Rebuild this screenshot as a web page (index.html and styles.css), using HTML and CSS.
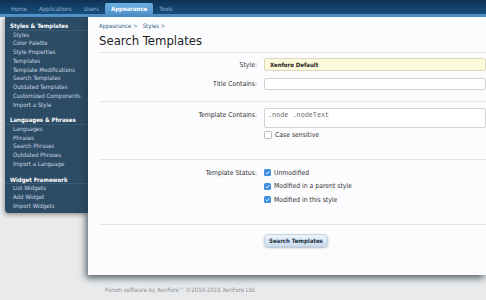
FILE: index.html
```html
<!DOCTYPE html>
<html lang="en">
<head>
    <meta charset="UTF-8">
    <meta name="viewport" content="width=device-width, initial-scale=1.0">
    <title>Search Templates</title>
    <link rel="stylesheet" href="styles.css">
</head>
<body>
    <div class="nav">
        <a class="tab">Home</a>
        <a class="tab">Applications</a>
        <a class="tab">Users</a>
        <a class="tab active">Appearance</a>
        <a class="tab">Tools</a>
    </div>
    <div class="nav-strip"></div>

    <div class="layout">
        <div class="sidebar">
            <div class="side-section">
                <div class="side-heading">Styles &amp; Templates</div>
                <a class="side-link">Styles</a>
                <a class="side-link">Color Palette</a>
                <a class="side-link">Style Properties</a>
                <a class="side-link">Templates</a>
                <a class="side-link">Template Modifications</a>
                <a class="side-link">Search Templates</a>
                <a class="side-link">Outdated Templates</a>
                <a class="side-link">Customized Components</a>
                <a class="side-link">Import a Style</a>
            </div>
            <div class="side-section">
                <div class="side-heading">Languages &amp; Phrases</div>
                <a class="side-link">Languages</a>
                <a class="side-link">Phrases</a>
                <a class="side-link">Search Phrases</a>
                <a class="side-link">Outdated Phrases</a>
                <a class="side-link">Import a Language</a>
            </div>
            <div class="side-section">
                <div class="side-heading">Widget Framework</div>
                <a class="side-link">List Widgets</a>
                <a class="side-link">Add Widget</a>
                <a class="side-link">Import Widgets</a>
            </div>
        </div>

        <div class="panel">
            <div class="breadcrumb">
                <a>Appearance &gt;</a>
                <a>Styles &gt;</a>
            </div>
            <h1 class="title">Search Templates</h1>

            <form class="search-form">
                <div class="form-section first">
                    <div class="row">
                        <label class="row-label">Style:</label>
                        <div class="row-input"><div class="field select">Xenforo Default</div></div>
                    </div>
                    <div class="row">
                        <label class="row-label">Title Contains:</label>
                        <div class="row-input"><div class="field small"></div></div>
                    </div>
                </div>

                <div class="form-section second">
                    <div class="row">
                        <label class="row-label top">Template Contains:</label>
                        <div class="row-input">
                            <div class="field area">.node .nodeText</div>
                            <div class="check-line">
                                <span class="box"></span>
                                <span>Case sensitive</span>
                            </div>
                        </div>
                    </div>
                </div>

                <div class="form-section third">
                    <div class="row">
                        <label class="row-label top">Template Status:</label>
                        <div class="row-input">
                            <div class="check-line status">
                                <span class="box checked"><svg viewBox="0 0 8 8"><path d="M2 4.2l1.4 1.4L6 2.6" /></svg></span>
                                <span>Unmodified</span>
                            </div>
                            <div class="check-line status">
                                <span class="box checked"><svg viewBox="0 0 8 8"><path d="M2 4.2l1.4 1.4L6 2.6" /></svg></span>
                                <span>Modified in a parent style</span>
                            </div>
                            <div class="check-line status">
                                <span class="box checked"><svg viewBox="0 0 8 8"><path d="M2 4.2l1.4 1.4L6 2.6" /></svg></span>
                                <span>Modified in this style</span>
                            </div>
                        </div>
                    </div>
                </div>

                <div class="button-row">
                    <button type="submit" class="search-button">Search Templates</button>
                </div>
            </form>
        </div>
    </div>

    <div class="footer">Forum software by XenForo&trade; &copy;2010-2015 XenForo Ltd.</div>
</body>
</html>
```

FILE: styles.css
```css
body {
    font-family: "DejaVu Sans Condensed", "DejaVu Sans", sans-serif;
    margin: 0;
    background-color: #e9eaeb;
    color: #222;
    font-size: 6px;
    overflow: hidden;
}
a {
    text-decoration: none;
}
.nav {
    height: 14px;
    display: flex;
    align-items: flex-end;
    padding-left: 5px;
    background: linear-gradient(#0e3354, #1a4f7c);
}
.tab {
    height: 11px;
    line-height: 11px;
    padding: 0 6px;
    color: #8db4d6;
    font-size: 6px;
    border-radius: 2px 2px 0 0;
}
.tab.active {
    background: linear-gradient(#6aaee3, #5497d0);
    color: #fff;
    font-weight: bold;
}
.nav-strip {
    height: 3px;
    background-color: #5194cd;
}
.layout {
    display: flex;
    align-items: flex-start;
}
.sidebar {
    width: 83px;
    margin-left: 5px;
    padding: 5px 0 3px;
    background-color: #2c4b64;
    border-radius: 0 0 0 4px;
    box-shadow: -1px 2px 4px rgba(0, 0, 0, 0.35);
}
.side-section {
    margin-bottom: 7px;
}
.side-section:last-child {
    margin-bottom: 0;
}
.side-heading {
    padding-left: 5px;
    color: #fff;
    font-weight: bold;
    line-height: 7.5px;
    border-bottom: 1px solid #3b5b75;
}
.side-link {
    display: block;
    padding-left: 8px;
    color: #c9d7e3;
    line-height: 8.75px;
}
.panel {
    flex: 1;
    height: 258px;
    background-color: #fcfcfe;
    box-shadow: -2px 3px 7px rgba(40, 60, 75, 0.8);
    padding-left: 11px;
    box-sizing: border-box;
}
.breadcrumb {
    padding-top: 5px;
    line-height: 8px;
    display: flex;
    gap: 5px;
}
.breadcrumb a {
    color: #2a5b87;
}
.title {
    margin: 3px 0 0;
    font-size: 13px;
    font-weight: normal;
    line-height: 16px;
    color: #1e1e1e;
    padding-bottom: 3px;
    border-bottom: 1px solid #e3e6ea;
}
.form-section {
    border-bottom: 1px solid #e3e6ea;
    margin-left: 1px;
    font-size: 6.8px;
}
.form-section.first {
    padding: 5px 0 11px;
}
.form-section.second {
    padding: 6px 0 20px;
}
.form-section.third {
    padding: 6px 0 17px;
}
.row {
    display: grid;
    grid-template-columns: 157px 1fr;
    column-gap: 7px;
    align-items: center;
}
.row + .row {
    margin-top: 7px;
}
.row-label {
    text-align: right;
    color: #333;
}
.row-label.top {
    align-self: start;
    line-height: 14px;
}
.field {
    height: 13px;
    box-sizing: border-box;
    border: 1px solid #cfd2d6;
    border-radius: 2px;
    background-color: #fff;
    line-height: 11px;
    padding-left: 5px;
}
.field.select {
    background-color: #fdfbd9;
    border-color: #d9d8bf;
    font-weight: bold;
    font-size: 6px;
    color: #222;
}
.field.small {
    height: 12px;
}
.field.area {
    height: 20px;
    font-family: "Liberation Mono", monospace;
    color: #666;
    padding-top: 1px;
    padding-left: 3px;
}
.check-line {
    display: flex;
    align-items: center;
    gap: 3px;
    margin-top: 3px;
    height: 8px;
    color: #333;
}
.check-line.status {
    margin-top: 0;
    height: 13.5px;
}
.box {
    width: 6px;
    height: 6px;
    border: 1px solid #b8bcc1;
    border-radius: 1.5px;
    background-color: #fff;
    display: inline-flex;
}
.box.checked {
    width: 7px;
    height: 7px;
    border: none;
    background-color: #3d8edc;
}
.box svg {
    width: 7px;
    height: 7px;
    fill: none;
    stroke: #fff;
    stroke-width: 1.1;
}
.button-row {
    padding: 9px 0 0 165px;
}
.search-button {
    font-family: inherit;
    font-size: 6px;
    font-weight: bold;
    color: #1d2f40;
    height: 13px;
    padding: 0 4px;
    border: 1px solid #c3d3e2;
    border-radius: 4px;
    background: linear-gradient(#eef4fa, #c9dcef);
    box-shadow: 0 1px 2px rgba(60, 90, 120, 0.4);
}
.footer {
    padding: 11px 0 0 105px;
    color: #8a8d90;
    font-size: 6px;
}
```
